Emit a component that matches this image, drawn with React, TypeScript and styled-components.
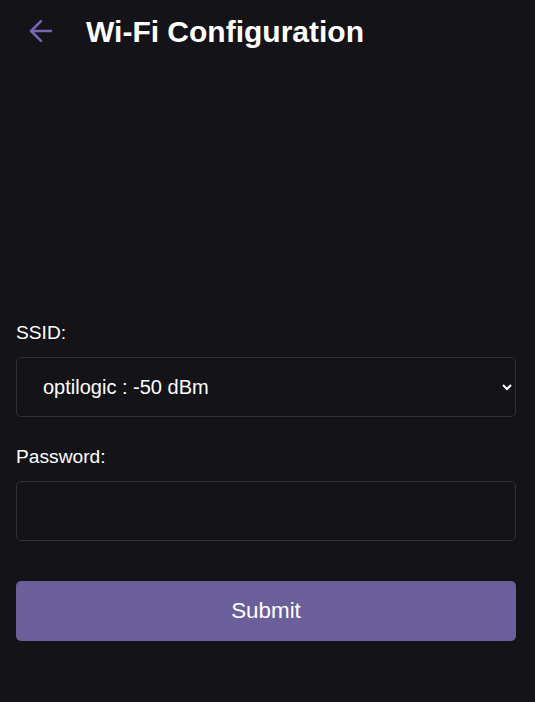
import React from 'react'
import styled, { createGlobalStyle } from 'styled-components'
import { ArrowLeft } from 'lucide-react'

const GlobalStyle = createGlobalStyle`
  html, body {
    margin: 0;
    padding: 0;
    background: #141318;
    color: #ffffff;
    font-family: 'Liberation Sans', Arial, sans-serif;
  }
`

const Page = styled.div`
  min-height: 702px;
  background: #141318;
`

const Header = styled.header`
  display: flex;
  align-items: center;
  gap: 28px;
  height: 62px;
  padding-left: 24px;
`

const BackButton = styled.button`
  display: flex;
  align-items: center;
  padding: 0;
  border: none;
  background: none;
  color: #7866b4;
  cursor: pointer;
`

const Title = styled.h1`
  margin: 0;
  padding-top: 2px;
  font-size: 30px;
  font-weight: bold;
  line-height: normal;
`

const Form = styled.form`
  display: flex;
  flex-direction: column;
  padding: 260px 19px 0 16px;
`

const Field = styled.div`
  display: flex;
  flex-direction: column;
  margin-bottom: ${({ $last }: { $last?: boolean }) => ($last ? '40px' : '29px')};
`

const Label = styled.label`
  font-size: 19.2px;
  line-height: 22px;
  margin-bottom: 13px;
`

const controlStyles = `
  box-sizing: border-box;
  width: 100%;
  height: 60px;
  border: 1px solid #323138;
  border-radius: 5px;
  background: #141318;
  color: #ffffff;
  font-family: 'Liberation Sans', Arial, sans-serif;
  font-size: 20px;
  color-scheme: dark;
  outline: none;
`

const Select = styled.select`
  ${controlStyles}
  padding: 0 6px 0 22px;
`

const Input = styled.input`
  ${controlStyles}
  padding: 0 24px;
`

const SubmitButton = styled.button`
  height: 60px;
  border: none;
  border-radius: 5px;
  background: #6a5f9a;
  color: #ffffff;
  font-family: 'Liberation Sans', Arial, sans-serif;
  font-size: 22.4px;
  cursor: pointer;
`

export default function App() {
  return (
    <Page>
      <GlobalStyle />
      <Header>
        <BackButton aria-label="Back">
          <ArrowLeft size={34} strokeWidth={1.8} />
        </BackButton>
        <Title>Wi-Fi Configuration</Title>
      </Header>
      <Form onSubmit={(e) => e.preventDefault()}>
        <Field>
          <Label htmlFor="ssid">SSID:</Label>
          <Select id="ssid" defaultValue="optilogic">
            <option value="optilogic">optilogic : -50 dBm</option>
          </Select>
        </Field>
        <Field $last>
          <Label htmlFor="password">Password:</Label>
          <Input id="password" type="password" />
        </Field>
        <SubmitButton type="submit">Submit</SubmitButton>
      </Form>
    </Page>
  )
}
